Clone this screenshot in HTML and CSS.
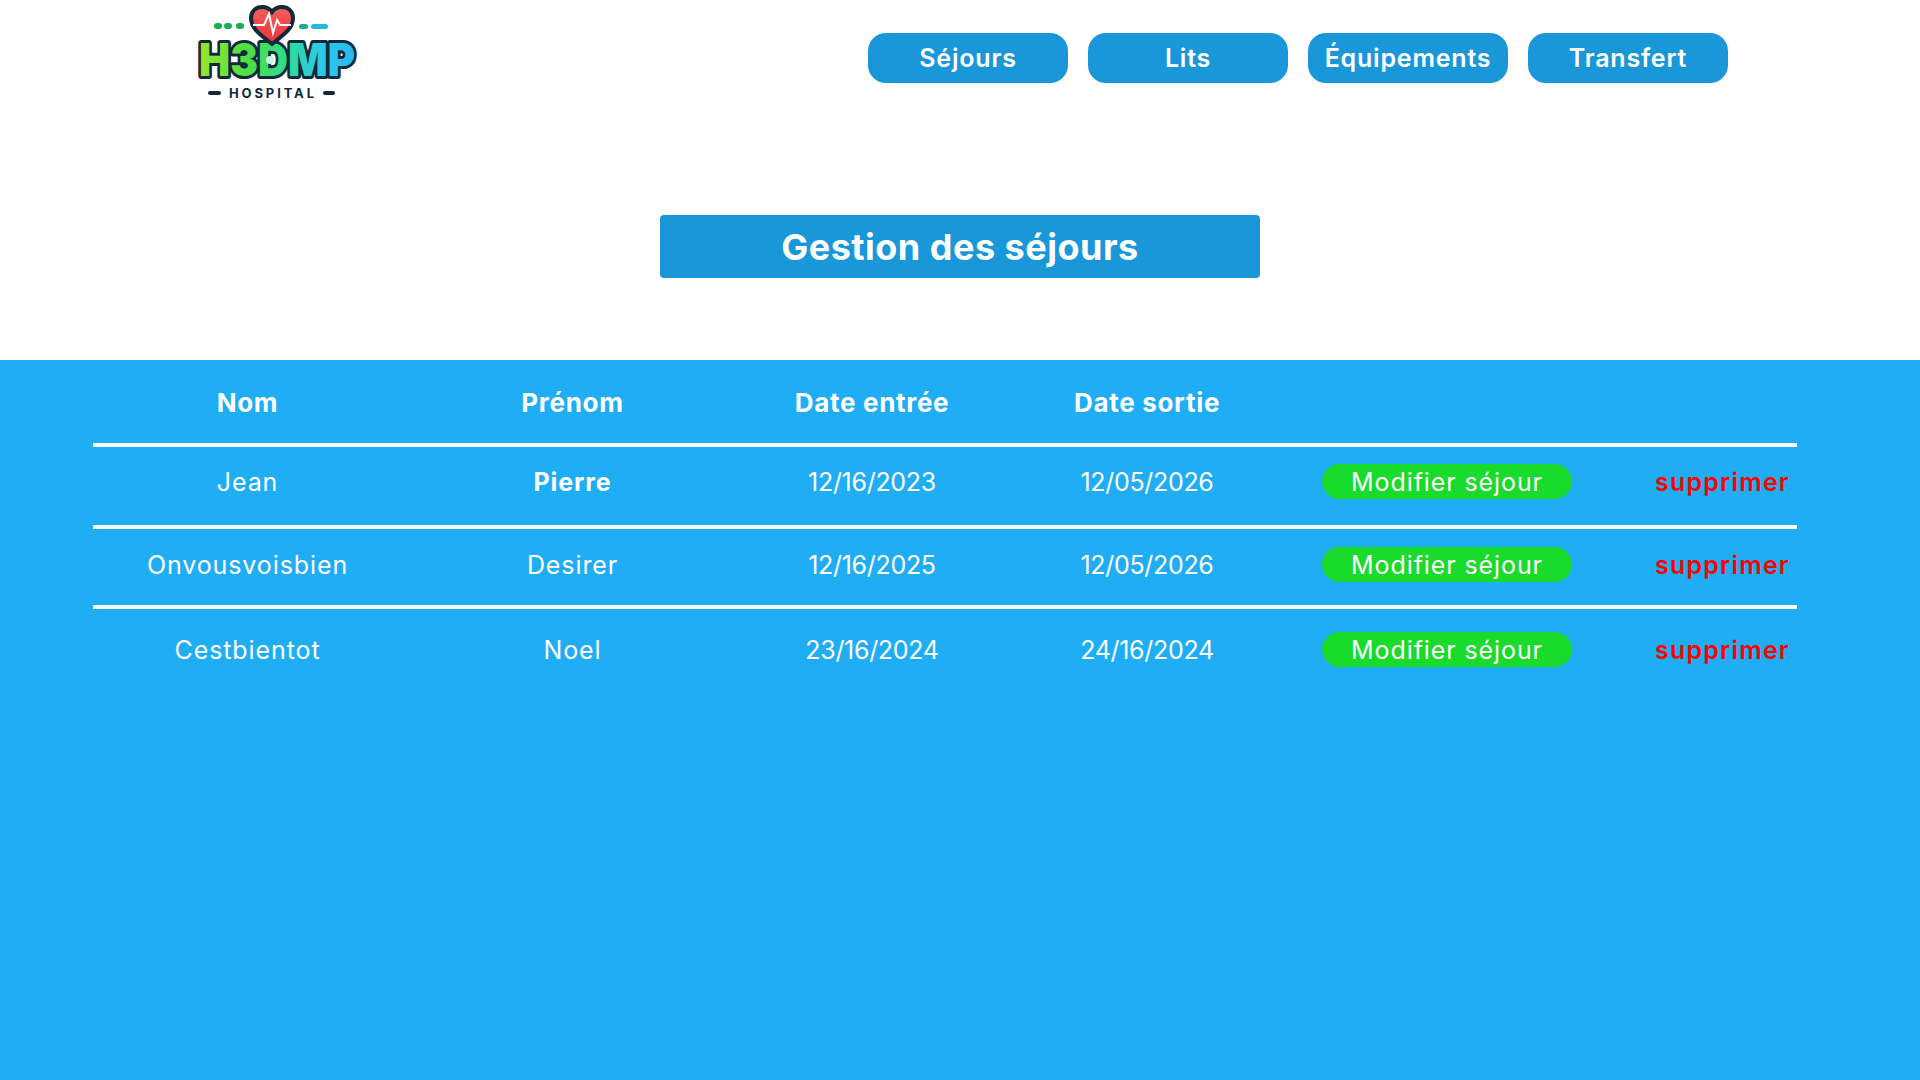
FILE: index.html
```html
<!DOCTYPE html>
<html lang="fr">
<head>
<meta charset="utf-8">
<title>Gestion des séjours</title>
<link rel="stylesheet" href="styles.css">
</head>
<body>
<header class="top">
  <svg class="logo" width="170" height="104" viewBox="0 0 170 104" aria-label="H3DMP Hospital">
    <defs>
      <linearGradient id="g" x1="0" x2="1" y1="0" y2="0">
        <stop offset="0" stop-color="#9ce52f"/>
        <stop offset=".3" stop-color="#4fe040"/>
        <stop offset=".55" stop-color="#2fdc8a"/>
        <stop offset=".75" stop-color="#2ccce4"/>
        <stop offset="1" stop-color="#2ab8f2"/>
      </linearGradient>
      <linearGradient id="h" x1="0" x2="0" y1="0" y2="1">
        <stop offset="0" stop-color="#f4605c"/>
        <stop offset="1" stop-color="#ee3038"/>
      </linearGradient>
    </defs>
    <rect x="19" y="23" width="8" height="6" rx="3" fill="#14b050"/>
    <rect x="29" y="23" width="8" height="6" rx="3" fill="#14b050"/>
    <rect x="41" y="23" width="8" height="6" rx="3" fill="#14b050"/>
    <rect x="104" y="24" width="9" height="5" rx="2.5" fill="#10ae9e"/>
    <rect x="116" y="24" width="17" height="5" rx="2.5" fill="#20bcd8"/>
    <text class="logo-big" x="82" y="76" text-anchor="middle" textLength="156" lengthAdjust="spacingAndGlyphs">H3DMP</text>
    <ellipse cx="75" cy="60" rx="4" ry="4" fill="#c8f7dc"/>
    <path d="M77 44C66 35 56 29 56 18C56 11 61 7 67 7C71 7 75 9 77 12C79 9 83 7 87 7C93 7 98 11 98 18C98 29 88 35 77 44Z" fill="url(#h)" stroke="#12283c" stroke-width="4"/>
    <path d="M58 25H69L74 14L78 33L82 20L85 25H96" fill="none" stroke="#fff" stroke-width="2"/>
    <rect x="13" y="91" width="13" height="4" rx="2" fill="#12283c"/>
    <rect x="128" y="91" width="12" height="4" rx="2" fill="#12283c"/>
    <text class="logo-small" x="76.5" y="97.5" text-anchor="middle" textLength="85">HOSPITAL</text>
  </svg>
  <nav class="nav">
    <a class="nav-btn">Séjours</a>
    <a class="nav-btn">Lits</a>
    <a class="nav-btn">Équipements</a>
    <a class="nav-btn">Transfert</a>
  </nav>
</header>
<div class="title-wrap"><h1 class="title">Gestion des séjours</h1></div>
<main class="panel">
  <table class="list">
    <colgroup>
      <col class="c1"><col class="c2"><col class="c3"><col class="c4"><col class="c5"><col class="c6">
    </colgroup>
    <thead>
      <tr class="head"><th>Nom</th><th>Prénom</th><th>Date entrée</th><th>Date sortie</th><th></th><th></th></tr>
    </thead>
    <tbody>
      <tr class="r1"><td>Jean</td><td class="strong">Pierre</td><td class="date">12/16/2023</td><td class="date">12/05/2026</td><td><a class="pill">Modifier séjour</a></td><td class="del">supprimer</td></tr>
      <tr class="r2"><td>Onvousvoisbien</td><td>Desirer</td><td class="date">12/16/2025</td><td class="date">12/05/2026</td><td><a class="pill">Modifier séjour</a></td><td class="del">supprimer</td></tr>
      <tr class="r3"><td>Cestbientot</td><td>Noel</td><td class="date">23/16/2024</td><td class="date">24/16/2024</td><td><a class="pill">Modifier séjour</a></td><td class="del">supprimer</td></tr>
    </tbody>
  </table>
</main>
</body>
</html>
```

FILE: styles.css
```css
* { box-sizing: border-box; }
html, body { margin: 0; height: 100%; }
body {
  display: flex;
  flex-direction: column;
  height: 1080px;
  overflow: hidden;
  background: #fff;
  color: #fff;
  font-family: "Inter", "Liberation Sans", sans-serif;
}
.top {
  display: flex;
  align-items: flex-start;
  height: 215px;
  padding-left: 195px;
}
.logo { display: block; flex: none; overflow: visible; }
.logo-big {
  font-family: "Inter", sans-serif;
  font-weight: 900;
  font-size: 46px;
  fill: url(#g);
  stroke: #12283c;
  stroke-width: 6px;
  paint-order: stroke;
  stroke-linejoin: round;
}
.logo-small {
  font-family: "Inter", sans-serif;
  font-weight: 700;
  font-size: 13px;
  fill: #12283c;
}
.nav {
  display: flex;
  gap: 20px;
  margin-left: 503px;
  margin-top: 33px;
}
.nav-btn {
  display: flex;
  align-items: center;
  justify-content: center;
  width: 200px;
  height: 50px;
  border-radius: 18px;
  background: #1997d8;
  font-size: 25px;
  font-weight: 600;
  letter-spacing: 0.8px;
}
.title-wrap {
  display: flex;
  justify-content: center;
  height: 145px;
}
.title {
  display: flex;
  align-items: center;
  justify-content: center;
  width: 600px;
  height: 63px;
  margin: 0;
  border-radius: 4px;
  background: #1997d8;
  font-size: 36px;
  font-weight: 700;
  letter-spacing: 0.5px;
}
.panel {
  flex: 1;
  padding-left: 93px;
  background: #1fadf5;
}
.list {
  width: 1704px;
  table-layout: fixed;
  border-collapse: separate;
  border-spacing: 0;
  font-size: 25px;
  letter-spacing: 0.9px;
}
.c1 { width: 309px; }
.c2 { width: 341px; }
.c3 { width: 258px; }
.c4 { width: 292px; }
.c5 { width: 308px; }
.c6 { width: 196px; }
th, td { padding: 0; text-align: center; vertical-align: middle; }
th {
  height: 87px;
  padding-top: 1px;
  border-bottom: 4px solid #fff;
  font-size: 26px;
  font-weight: 700;
  letter-spacing: 0.7px;
}
.r1 td { height: 82px; padding-bottom: 9px; border-bottom: 4px solid #fff; }
.r2 td { height: 80px; padding-bottom: 5px; border-bottom: 4px solid #fff; }
.r3 td { height: 81px; }
.list .date { letter-spacing: -0.3px; }
.strong { font-weight: 700; }
.pill {
  display: inline-flex;
  align-items: center;
  justify-content: center;
  width: 250px;
  height: 35px;
  border-radius: 18px;
  background: #18db2c;
  vertical-align: middle;
}
.list .del {
  padding-right: 7px;
  text-align: right;
  color: #ff0000;
  font-weight: 600;
  letter-spacing: 1.2px;
}
```
